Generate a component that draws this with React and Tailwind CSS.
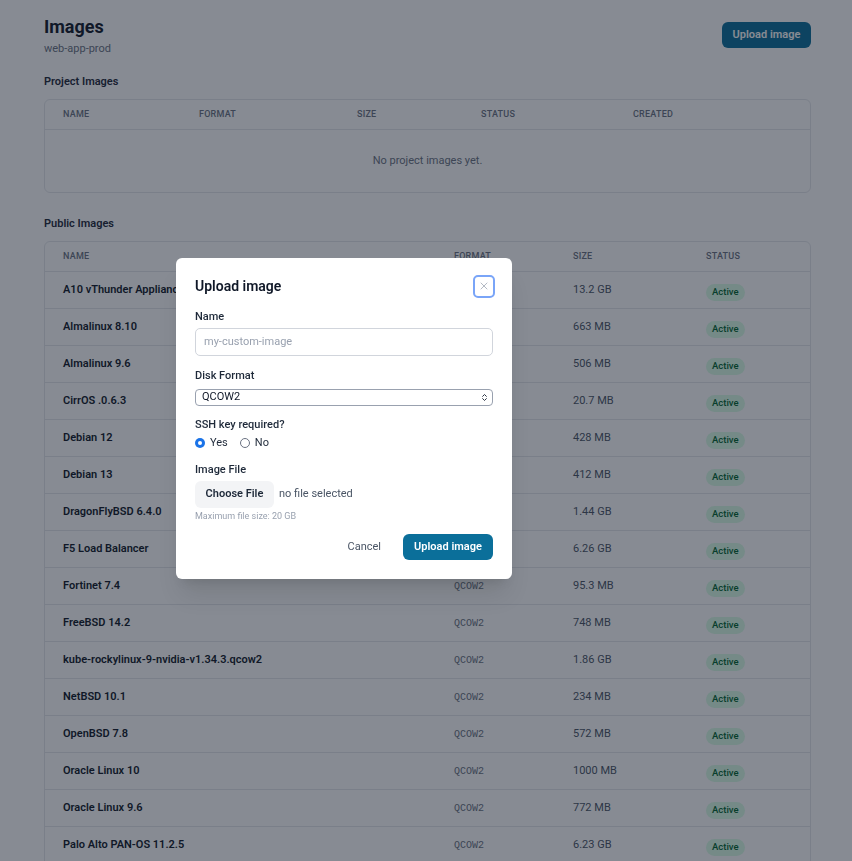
import React from "react";
import { X, ChevronsUpDown } from "lucide-react";

const publicImages = [
  { name: "A10 vThunder Appliance 6.0.5", size: "13.2 GB" },
  { name: "Almalinux 8.10", size: "663 MB" },
  { name: "Almalinux 9.6", size: "506 MB" },
  { name: "CirrOS .0.6.3", size: "20.7 MB" },
  { name: "Debian 12", size: "428 MB" },
  { name: "Debian 13", size: "412 MB" },
  { name: "DragonFlyBSD 6.4.0", size: "1.44 GB" },
  { name: "F5 Load Balancer", size: "6.26 GB" },
  { name: "Fortinet 7.4", size: "95.3 MB" },
  { name: "FreeBSD 14.2", size: "748 MB" },
  { name: "kube-rockylinux-9-nvidia-v1.34.3.qcow2", size: "1.86 GB" },
  { name: "NetBSD 10.1", size: "234 MB" },
  { name: "OpenBSD 7.8", size: "572 MB" },
  { name: "Oracle Linux 10", size: "1000 MB" },
  { name: "Oracle Linux 9.6", size: "772 MB" },
  { name: "Palo Alto PAN-OS 11.2.5", size: "6.23 GB" },
  { name: "Rocky Linux 8.10", size: "1.02 GB" },
  { name: "Rocky Linux 9.6", size: "598 MB" },
];

const Radio = ({ checked, label }) => (
  <label className="flex items-center gap-[5px] text-[11px] text-gray-800">
    {checked ? (
      <span className="flex items-center justify-center w-[10px] h-[10px] rounded-full bg-[#1a73e8]">
        <span className="w-[4px] h-[4px] rounded-full bg-white" />
      </span>
    ) : (
      <span className="w-[10px] h-[10px] rounded-full border border-gray-500 bg-white" />
    )}
    {label}
  </label>
);

const UploadModal = () => {
  return (
    <div className="fixed inset-0 bg-gray-900/50">
      <div className="absolute left-[176px] top-[258px] w-[336px] bg-white rounded-md shadow-xl px-[19px] pt-[18px] pb-[19px]">
        <div className="flex items-center justify-between h-[20px]">
          <h2 className="text-[14px] font-semibold text-gray-900">Upload image</h2>
          <button className="flex items-center justify-center w-[18px] h-[19px] rounded-[3px] outline-2 outline-[#7aa5f8] text-gray-400">
            <X className="w-[12px] h-[12px]" strokeWidth={1.5} />
          </button>
        </div>

        {/* Name */}
        <div className="mt-[13px]">
          <div className="text-[11px] font-medium text-gray-800 leading-4">Name</div>
          <div className="mt-[3px] h-[28px] border border-gray-300 rounded-[5px] px-[8px] flex items-center text-[11px] text-gray-400">
            my-custom-image
          </div>
        </div>

        {/* Disk format */}
        <div className="mt-[12px]">
          <div className="text-[11px] font-medium text-gray-800 leading-4">Disk Format</div>
          <div className="mt-[5px] h-[17px] border border-gray-400 rounded-[4px] pl-[6px] pr-[3px] flex items-center justify-between text-[11px] text-gray-900">
            <span>QCOW2</span>
            <ChevronsUpDown className="w-[9px] h-[9px] text-gray-800" strokeWidth={2.5} />
          </div>
        </div>

        {/* SSH */}
        <div className="mt-[11px]">
          <div className="text-[11px] font-medium text-gray-800 leading-4">SSH key required?</div>
          <div className="mt-[3px] flex items-center gap-[12px] h-[14px]">
            <Radio checked label="Yes" />
            <Radio label="No" />
          </div>
        </div>

        {/* File */}
        <div className="mt-[12px]">
          <div className="text-[11px] font-medium text-gray-800 leading-4">Image File</div>
          <div className="mt-[3px] flex items-center gap-[5px]">
            <span className="h-[27px] w-[79px] flex items-center justify-center rounded-md bg-gray-100 text-[11px] font-semibold text-gray-800">
              Choose File
            </span>
            <span className="text-[11px] text-gray-600">no file selected</span>
          </div>
          <div className="mt-[2px] text-[9px] text-gray-400 leading-[12px]">Maximum file size: 20 GB</div>
        </div>

        <div className="mt-[12px] flex items-center justify-end gap-[10px]">
          <button className="px-3 text-[11px] text-gray-600">Cancel</button>
          <button className="h-[26px] w-[90px] rounded-md bg-[#0b6f9a] text-white text-[11px] font-semibold">
            Upload image
          </button>
        </div>
      </div>
    </div>
  );
};

const Badge = () => (
  <span className="inline-flex items-center h-[17px] px-[6px] rounded-full bg-green-100 text-green-800 text-[9.5px] font-medium">
    Active
  </span>
);

export default function App() {
  return (
    <div className="min-h-screen bg-white font-['Roboto',sans-serif] pl-[44px] pr-[41px] pt-[13px] pb-10">
      {/* Header */}
      <div className="flex items-center justify-between">
        <div>
          <h1 className="text-[18px] leading-7 font-bold text-gray-900">Images</h1>
          <p className="text-[11px] leading-4 text-gray-500">web-app-prod</p>
        </div>
        <button className="h-[26px] w-[89px] rounded-md bg-[#0b6f9a] text-white text-[11px] font-semibold">
          Upload image
        </button>
      </div>

      {/* Project images */}
      <h3 className="mt-[17px] mb-[9px] text-[11px] leading-4 font-semibold text-gray-800">Project Images</h3>
      <div className="border border-gray-200 rounded-md">
        <div className="grid grid-cols-[136px_158px_124px_152px_1fr] h-[30px] items-center border-b border-gray-200 text-[9px] font-medium uppercase tracking-wide text-gray-500">
          <div className="px-[18px]">Name</div>
          <div className="px-[18px]">Format</div>
          <div className="px-[18px]">Size</div>
          <div className="px-[18px]">Status</div>
          <div className="px-[18px]">Created</div>
        </div>
        <div className="h-[62px] flex items-center justify-center text-[11px] text-gray-500">
          No project images yet.
        </div>
      </div>

      {/* Public images */}
      <h3 className="mt-[23px] mb-[9px] text-[11px] leading-4 font-semibold text-gray-800">Public Images</h3>
      <div className="border border-gray-200 rounded-md">
        <div className="grid grid-cols-[391px_119px_133px_1fr] h-[30px] items-center border-b border-gray-200 text-[9px] font-medium uppercase tracking-wide text-gray-500">
          <div className="px-[18px]">Name</div>
          <div className="px-[18px]">Format</div>
          <div className="px-[18px]">Size</div>
          <div className="px-[18px]">Status</div>
        </div>
        {publicImages.map((img) => (
          <div
            key={img.name}
            className="grid grid-cols-[391px_119px_133px_1fr] h-[37px] items-center border-b border-gray-200 last:border-b-0"
          >
            <div className="px-[18px] text-[11px] font-semibold text-gray-900">{img.name}</div>
            <div className="px-[18px] text-[10px] font-['Liberation_Mono',monospace] text-gray-500">QCOW2</div>
            <div className="px-[18px] text-[11px] text-gray-600">{img.size}</div>
            <div className="px-[18px]">
              <Badge />
            </div>
          </div>
        ))}
      </div>

      <UploadModal />
    </div>
  );
}
